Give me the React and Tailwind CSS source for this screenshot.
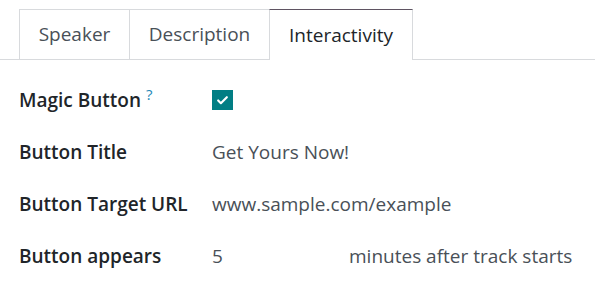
import { Check } from 'lucide-react';

const tabs = [
  { name: 'Speaker', w: 'w-[111px]' },
  { name: 'Description', w: 'w-[140px]' },
  { name: 'Interactivity', w: 'w-[144px]' },
];

const Row = ({ label, children, help }) => (
  <div className="flex items-center h-[52px]">
    <div className="w-[193px] font-semibold text-[#212529]">
      {label}
      {help && <sup className="ml-[5px] text-[#2488b8] text-[15px] font-normal relative -top-[7px]">?</sup>}
    </div>
    <div className="flex-1 flex items-center text-[#495057]">{children}</div>
  </div>
);

const App = () => {
  return (
    <div className="w-[595px] h-[299px] bg-white pt-[9px] text-[19px]" style={{ fontFamily: '"Open Sans", "Noto Sans", sans-serif' }}>
      <div className="flex pl-[19px] border-b border-[#d8dadd] h-[51px]">
        {tabs.map((t, i) => (
          <div
            key={t.name}
            className={
              i === 2
                ? `${t.w} flex items-center justify-center border border-b-0 border-[#d8dadd] border-t-[#5f5462] bg-white text-[#212529] -mb-px -ml-px`
                : i === 0
                ? `${t.w} flex items-center justify-center border border-b-0 border-[#d8dadd] text-[#495057]`
                : `${t.w} flex items-center justify-center border border-b-0 border-l-0 border-[#d8dadd] text-[#495057]`
            }
          >
            {t.name}
          </div>
        ))}
      </div>
      <div className="pl-[19px] pt-[14px]">
        <Row label="Magic Button" help>
          <span className="w-[21px] h-[20px] bg-[#017e84] flex items-center justify-center">
            <Check size={13} strokeWidth={4} color="white" />
          </span>
        </Row>
        <Row label="Button Title">Get Yours Now!</Row>
        <Row label="Button Target URL">www.sample.com/example</Row>
        <Row label="Button appears">
          <span className="w-[137px]">5</span>
          <span>minutes after track starts</span>
        </Row>
      </div>
    </div>
  );
};

export default App;
